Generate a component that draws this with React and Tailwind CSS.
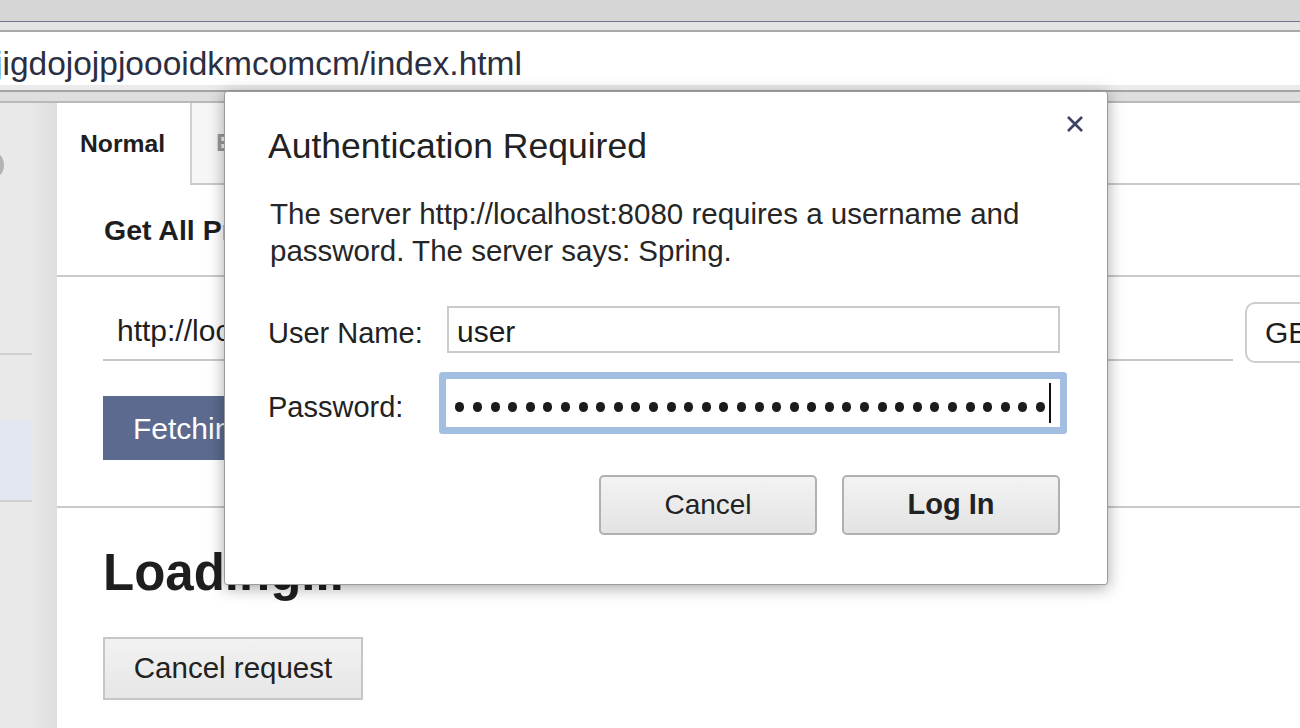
function PasswordDots({ count }) {
  return (
    <div className="flex-1 h-full overflow-hidden flex items-center justify-end gap-[8.6px] pt-[8px]">
      {Array.from({ length: count }).map((_, i) => (
        <div key={i} className="w-[9px] h-[9.5px] shrink-0 rounded-full bg-[#1c1c1c]" />
      ))}
    </div>
  );
}

function DialogButton({ children, bold }) {
  return (
    <button
      className={`h-[60px] w-[218px] rounded-[5px] border-2 border-[#b0b0b0] bg-gradient-to-b from-[#f3f3f3] to-[#e3e3e3] text-[28px] text-[#222] ${bold ? 'font-bold text-[29px]' : ''}`}
    >
      {children}
    </button>
  );
}

function AuthDialog() {
  return (
    <div className="absolute left-[224px] top-[91px] w-[884px] h-[494px] bg-white border border-[#9c9c9c] rounded-[3px] shadow-[0_3px_16px_rgba(0,0,0,0.35)] pl-[43px] pr-[47px] pt-[34px] text-[#222]">
      <button className="absolute right-[22px] top-[22px] w-[20px] h-[20px]">
        <svg viewBox="0 0 20 20" className="w-[20px] h-[20px]">
          <path d="M3 3 L17 17 M17 3 L3 17" stroke="#3b4263" strokeWidth="2.6" fill="none" />
        </svg>
      </button>

      <h1 className="text-[35.5px] leading-[40px] whitespace-nowrap">Authentication Required</h1>

      <p className="mt-[29px] pl-[2px] text-[29.5px] leading-[37px] text-[#262626] whitespace-nowrap">
        The server http://localhost:8080 requires a username and
        <br />
        password. The server says: Spring.
      </p>

      <div className="mt-[37px] flex items-center">
        <label className="w-[179px] pt-[6px] text-[29px] leading-[34px]">User Name:</label>
        <div className="w-[613px] h-[47px] border-2 border-[#cbcbcb] flex items-center pl-[8px] pt-[5px] text-[30px] leading-[34px] text-[#1c1c1c]">
          user
        </div>
      </div>

      <div className="mt-[26px] flex items-center">
        <label className="w-[179px] pt-[8px] text-[29px] leading-[34px]">Password:</label>
        <div className="w-[614px] h-[48px] rounded-[1px] bg-white shadow-[0_0_0_7px_#a2bfe1] flex items-center pl-[2px] pr-[9px]">
          <PasswordDots count={35} />
          <div className="ml-[4px] w-[2px] h-[40px] bg-[#111]" />
        </div>
      </div>

      <div className="mt-[48px] flex justify-end gap-[25px]">
        <DialogButton>Cancel</DialogButton>
        <DialogButton bold>Log In</DialogButton>
      </div>
    </div>
  );
}

export default function App() {
  return (
    <div className="relative w-[1300px] h-[728px] overflow-hidden bg-white font-['Liberation_Sans',Arial,sans-serif] text-[#1e1e1e]">
      {/* browser chrome */}
      <div className="h-[21px] bg-[#d6d6d6]" />
      <div className="h-[1px] bg-[#6f7488]" />
      <div className="h-[8px] bg-[#e4e4e4]" />
      <div className="h-[2px] bg-[#a9a9a9]" />
      <div className="h-[53px] flex items-center overflow-hidden pt-[10px]">
        <span className="-ml-[5px] text-[33.5px] leading-[40px] text-[#2b2f42] whitespace-nowrap">
          jigdojojpjoooidkmcomcm/index.html
        </span>
      </div>
      <div className="h-[5px] bg-[#ebebeb]" />
      <div className="h-[2px] bg-[#a4a4a4]" />
      <div className="h-[9px] bg-[#dedede]" />
      <div className="h-[2px] bg-[#b9b9b9]" />

      {/* page */}
      <div className="flex h-[625px]">
        <aside className="w-[57px] shrink-0 bg-gradient-to-r from-[#e9e9e9] via-[#e9e9e9] to-[#dedede] flex flex-col">
          <div className="w-[32px]">
            <div className="h-[47px]" />
            <div className="w-[30px] h-[30px] rounded-full bg-[#b3b3b3] -ml-[26px]" />
            <div className="h-[173px]" />
            <div className="h-[2px] bg-[#cfcfcf]" />
            <div className="h-[65px]" />
            <div className="h-[80px] bg-[#e2e6ee]" />
            <div className="h-[2px] bg-[#cfcfcf]" />
          </div>
        </aside>

        <main className="flex-1 flex flex-col">
          <div className="flex h-[82px]">
            <div className="w-[133px] flex items-center pl-[23px] text-[24.7px] font-bold">Normal</div>
            <div className="flex-1 flex border-b-2 border-[#cacaca]">
              <div className="w-[140px] border-l-2 border-[#d0d0d0] bg-[#f6f6f6] flex items-center pl-[24px] text-[24.7px] font-bold text-[#9a9a9a]">
                Extended
              </div>
            </div>
          </div>

          <div className="h-[92px] flex items-center pl-[47px] border-b-2 border-[#cacaca]">
            <h2 className="text-[28.5px] font-bold">Get All Products</h2>
          </div>

          <div className="pl-[46px] pt-[25px] pb-[46px] border-b-2 border-[#cacaca]">
            <div className="flex items-start gap-[12px]">
              <div className="w-[1130px] h-[59px] border-b-2 border-[#c8c8c8] flex items-center pl-[14px] text-[30px] whitespace-nowrap">
                http://localhost:8080/products
              </div>
              <div className="w-[90px] h-[61px] shrink-0 border-2 border-[#cdcdcd] rounded-[10px] flex items-center pl-[18px] text-[30px]">
                GET
              </div>
            </div>
            <button className="mt-[33px] h-[64px] px-[30px] bg-[#5b6a8e] text-white text-[30px]">Fetching...</button>
          </div>

          <div className="pl-[46px]">
            <h2 className="mt-[35px] text-[51px] leading-[60px] font-bold">Loading...</h2>
            <button className="mt-[34px] w-[260px] h-[63px] border-2 border-[#c6c6c6] bg-gradient-to-b from-[#f2f2f2] to-[#e6e6e6] text-[29.5px] text-[#222]">
              Cancel request
            </button>
          </div>
        </main>
      </div>

      <AuthDialog />
    </div>
  );
}
